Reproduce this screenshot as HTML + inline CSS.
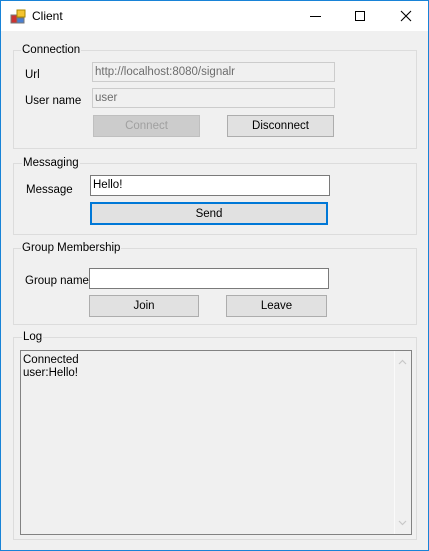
<!DOCTYPE html>
<html><head><style>
*{box-sizing:border-box;margin:0;padding:0}
body{width:429px;height:551px;overflow:hidden;font-family:"Liberation Sans",sans-serif;font-size:11.5px;color:#000;background:#fff}
.win{position:absolute;left:0;top:0;width:429px;height:551px;border:1px solid #1883d7;background:#f0f0f0}
.title{position:absolute;left:0;top:0;width:427px;height:30px;background:#fff}
.a{position:absolute;white-space:nowrap}
.gb{position:absolute;border:1px solid #dcdcdc}
.gl{position:absolute;background:#f0f0f0;padding:0 1px;line-height:15px}
.tb{position:absolute;border:1px solid #7a7a7a;background:#fff;padding:0 0 0 2px;line-height:18px}
.tbd{border-color:#ccc;background:#f0f0f0;color:#6d6d6d}
.bt{position:absolute;border:1px solid #adadad;background:#e1e1e1;text-align:center;line-height:21px}
</style></head><body>
<div class="win">
<div class="title">
<svg class="a" style="left:9px;top:8px" width="16" height="16" viewBox="0 0 16 16">
<rect x="1" y="6" width="6" height="8" fill="#c33" stroke="#777" stroke-width="1"/>
<rect x="7" y="1" width="8" height="7" fill="#f4c430" stroke="#a80" stroke-width="1"/>
<rect x="7" y="9" width="7" height="5" fill="#4a7fd0" stroke="#777" stroke-width="1"/>
</svg>
<div class="a" style="left:31px;top:8px;font-size:12px">Client</div>
<div class="a" style="left:309px;top:15px;width:11px;height:1px;background:#000"></div>
<div class="a" style="left:354px;top:10px;width:10px;height:10px;border:1px solid #000"></div>
<svg class="a" style="left:399px;top:9px" width="12" height="12"><path d="M1 1L11 11M11 1L1 11" stroke="#000" stroke-width="1.1"/></svg>
</div>

<div class="gb" style="left:12px;top:49px;width:404px;height:99px"></div>
<div class="gl" style="left:20px;top:42px">Connection</div>
<div class="a" style="left:24px;top:68px">Url</div>
<div class="tb tbd" style="left:91px;top:61px;width:243px;height:20px">http://localhost:8080/signalr</div>
<div class="a" style="left:24px;top:94px">User name</div>
<div class="tb tbd" style="left:91px;top:87px;width:243px;height:20px">user</div>
<div class="bt" style="left:92px;top:114px;width:107px;height:22px;background:#ccc;border-color:#bfbfbf;color:#a0a0a0">Connect</div>
<div class="bt" style="left:226px;top:114px;width:107px;height:22px">Disconnect</div>

<div class="gb" style="left:12px;top:162px;width:404px;height:72px"></div>
<div class="gl" style="left:21px;top:155px">Messaging</div>
<div class="a" style="left:25px;top:183px">Message</div>
<div class="tb" style="left:89px;top:174px;width:240px;height:21px;color:#000;line-height:19px">Hello!</div>
<div class="bt" style="left:89px;top:201px;width:238px;height:23px;border:2px solid #0078d7;line-height:20px">Send</div>

<div class="gb" style="left:12px;top:247px;width:404px;height:77px"></div>
<div class="gl" style="left:20px;top:240px">Group Membership</div>
<div class="a" style="left:24px;top:274px">Group name</div>
<div class="tb" style="left:88px;top:267px;width:240px;height:21px"></div>
<div class="bt" style="left:88px;top:294px;width:110px;height:22px">Join</div>
<div class="bt" style="left:225px;top:294px;width:101px;height:22px">Leave</div>

<div class="gb" style="left:12px;top:336px;width:404px;height:203px"></div>
<div class="gl" style="left:21px;top:329px">Log</div>
<div class="a" style="left:19px;top:349px;width:392px;height:185px;border:1px solid #828282;background:#f0f0f0">
<div style="padding:3px 0 0 2px;line-height:13px">Connected<br>user:Hello!</div>
<div class="a" style="right:0;top:0;width:17px;height:183px;background:#f0f0f0;border-left:1px solid #fafafa"></div>
<svg class="a" style="right:4px;top:8px" width="9" height="6"><path d="M1 5L4.5 1.5L8 5" stroke="#c8c8c8" fill="none" stroke-width="1.2"/></svg>
<svg class="a" style="right:4px;bottom:8px" width="9" height="6"><path d="M1 1L4.5 4.5L8 1" stroke="#c8c8c8" fill="none" stroke-width="1.2"/></svg>
</div>
</div>
</body></html>
